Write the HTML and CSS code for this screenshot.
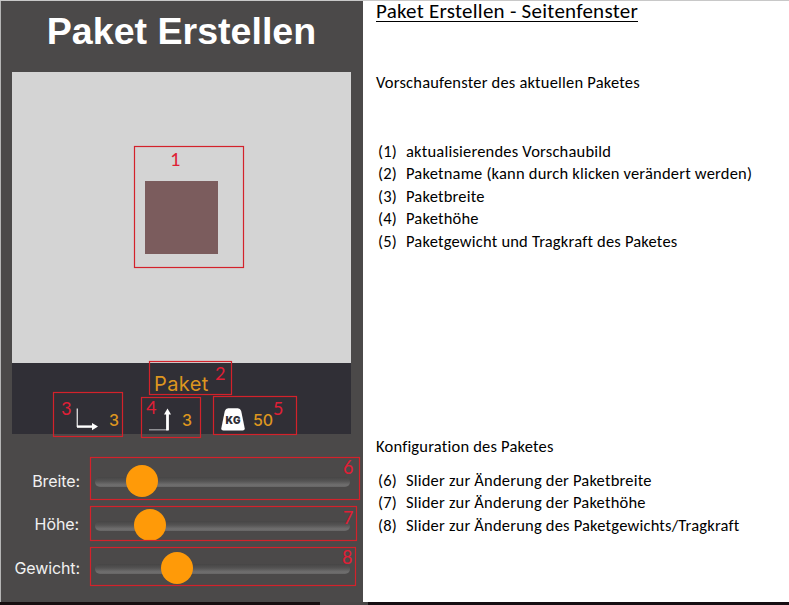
FILE: index.html
```html
<!DOCTYPE html>
<html lang="de">
<head>
<meta charset="utf-8">
<title>Paket Erstellen</title>
<link rel="stylesheet" href="styles.css">
</head>
<body>
<div class="page">
  <section class="panel">
    <h1 class="panel-title">Paket Erstellen</h1>
    <div class="preview"><div class="package"></div></div>
    <div class="info">
      <div class="name">Paket</div>
      <div class="stats">
        <svg class="icon-width" width="24" height="26" viewBox="0 0 24 26"><path d="M1.3 1.5v18.6" stroke="#d4d4d6" stroke-width="1.4" fill="none"/><path d="M1 19.6h16" stroke="#fff" stroke-width="2.4" fill="none"/><path d="M16 16l6 3.6-6 3.6z" fill="#fff"/></svg>
        <span class="value value-width">3</span>
        <svg class="icon-height" width="24" height="26" viewBox="0 0 24 26"><path d="M0 22.8h19" stroke="#a9a9ae" stroke-width="1.2" fill="none"/><path d="M18.5 23.4V6" stroke="#fff" stroke-width="2.8" fill="none"/><path d="M15 7.5l3.5-6 3.5 6z" fill="#fff"/></svg>
        <span class="value value-height">3</span>
        <svg class="icon-weight" width="24" height="26" viewBox="0 0 24 26"><path d="M7.2 1.2h9.6q2.5 0 3.4 2.8l3.5 17.2q.4 2.2-2 2.3H2.3q-2.4-.1-2-2.3L3.8 4q.9-2.8 3.4-2.8z" fill="#fff"/><text class="kg" x="12" y="17.3" text-anchor="middle" textLength="15">KG</text></svg>
        <span class="value value-weight">50</span>
      </div>
    </div>
    <div class="sliders">
      <div class="slider-row"><label class="breite">Breite:</label><div class="track"><i class="thumb" style="left:31px"></i></div></div>
      <div class="slider-row"><label class="hoehe">Höhe:</label><div class="track"><i class="thumb" style="left:39px"></i></div></div>
      <div class="slider-row"><label>Gewicht:</label><div class="track"><i class="thumb" style="left:66px"></i></div></div>
    </div>
    <svg class="marks" width="363" height="601" viewBox="0 0 363 601">
      <g class="boxes">
        <rect x="134.5" y="146.5" width="109" height="121"/>
        <rect x="149.5" y="361.5" width="82" height="33"/>
        <rect x="53.5" y="392.5" width="69" height="44"/>
        <rect x="141.5" y="397.5" width="59" height="40"/>
        <rect x="213.5" y="396.5" width="83" height="38"/>
        <rect x="90.5" y="457.5" width="269" height="42"/>
        <rect x="90.5" y="506.5" width="266" height="34"/>
        <rect x="90.5" y="547.5" width="265" height="38"/>
      </g>
      <g class="digits">
        <text x="170" y="166">1</text><text x="215" y="380">2</text><text x="61" y="415">3</text><text x="146" y="414">4</text>
        <text x="273" y="415">5</text><text x="343" y="474">6</text><text x="343" y="524">7</text><text x="342" y="564">8</text>
      </g>
    </svg>
  </section>
  <section class="notes">
    <h2><span>Paket Erstellen - Seitenfenster</span></h2>
    <p class="preview-note">Vorschaufenster des aktuellen Paketes</p>
    <ol class="preview-list">
      <li><b>(1)</b><span>aktualisierendes Vorschaubild</span></li>
      <li><b>(2)</b><span>Paketname (kann durch klicken verändert werden)</span></li>
      <li><b>(3)</b><span>Paketbreite</span></li>
      <li><b>(4)</b><span>Pakethöhe</span></li>
      <li><b>(5)</b><span>Paketgewicht und Tragkraft des Paketes</span></li>
    </ol>
    <p class="config-note">Konfiguration des Paketes</p>
    <ol class="config-list">
      <li><b>(6)</b><span>Slider zur Änderung der Paketbreite</span></li>
      <li><b>(7)</b><span>Slider zur Änderung der Pakethöhe</span></li>
      <li><b>(8)</b><span>Slider zur Änderung des Paketgewichts/Tragkraft</span></li>
    </ol>
  </section>
</div>
<div class="bottom-bar"></div>
</body>
</html>
```
FILE: styles.css
```css
* { box-sizing: border-box; }
body { margin: 0; width: 789px; height: 605px; overflow: hidden; background: #fff; }
.page { display: grid; grid-template-columns: 363px 1fr; height: 602px; border-top: 1px solid #c8c8c8; }
.panel { position: relative; background: #4b4949; border-left: 1px solid #b5b5b5; padding: 0 12px 0 11px; font-family: Inter, sans-serif; }
.panel-title { margin: 0; height: 71px; padding-top: 8px; text-align: center; font: bold 37.6px/44px "Liberation Sans", sans-serif; color: #fff; white-space: nowrap; }
.preview { height: 291px; background: #d4d4d4; padding: 109px 0 0 133px; }
.package { width: 73px; height: 73px; background: #7b5c5d; }
.info { height: 71px; background: #302f36; color: #dd961f; }
.name { padding: 9px 0 0 142px; height: 43px; font-size: 20px; line-height: 24px; letter-spacing: .4px; }
.stats { display: flex; align-items: flex-start; height: 28px; padding-left: 64px; }
.value { font-size: 16px; line-height: 29px; font-weight: 500; }
.value-width { width: 49px; padding-left: 9px; }
.value-height { width: 48px; padding-left: 9px; }
.value-weight { padding-left: 8px; letter-spacing: -.2px; }
.stats svg { margin-top: 1px; flex: none; }
.kg { font: 900 10px Inter, sans-serif; fill: #302f36; }
.sliders { padding-top: 25px; }
.slider-row { display: grid; grid-template-columns: 68px 255px; column-gap: 15px; height: 43.5px; align-items: center; }
.slider-row label { text-align: right; color: #f1f1f1; font-size: 16px; letter-spacing: -.1px; white-space: nowrap; }
.slider-row .hoehe { padding-right: 1px; }
.track { position: relative; height: 10px; margin-top: 3px; border-radius: 5px; background: linear-gradient(#464545, #545353 40%, #706f6f 80%, #666565); }
.thumb { position: absolute; top: -12px; width: 32px; height: 32px; border-radius: 50%; background: #ff9a08; }
.marks { position: absolute; left: -1px; top: -1px; }
.boxes rect { fill: none; stroke: #d3222b; stroke-width: 1.2; }
.digits { font: 20.5px Carlito, Lato, sans-serif; fill: #df1f36; }
.notes { padding: 0 0 0 13px; font: 16.5px/22px Carlito, Lato, sans-serif; letter-spacing: .2px; color: #000; white-space: nowrap; }
.notes h2 { margin: 0; height: 70px; font-weight: 400; font-size: 21px; line-height: 21px; letter-spacing: .26px; }
.notes h2 span { display: inline-block; height: 21px; border-bottom: 1px solid #000; }
.notes p { margin: 0; }
.notes ol { list-style: none; margin: 0; padding: 0 0 0 2px; }
.notes li { display: grid; grid-template-columns: 28px 1fr; height: 22.4px; }
.notes b { font-weight: 400; }
.preview-list { height: 226px; }
.preview-note { height: 69px; }
.config-note { height: 34px; }
.preview-list + .config-note { margin-top: 69px; }
.bottom-bar { height: 3px; background: linear-gradient(90deg, #160e10 0 320px, #484646 320px 368px, #160e12 368px); }
```
